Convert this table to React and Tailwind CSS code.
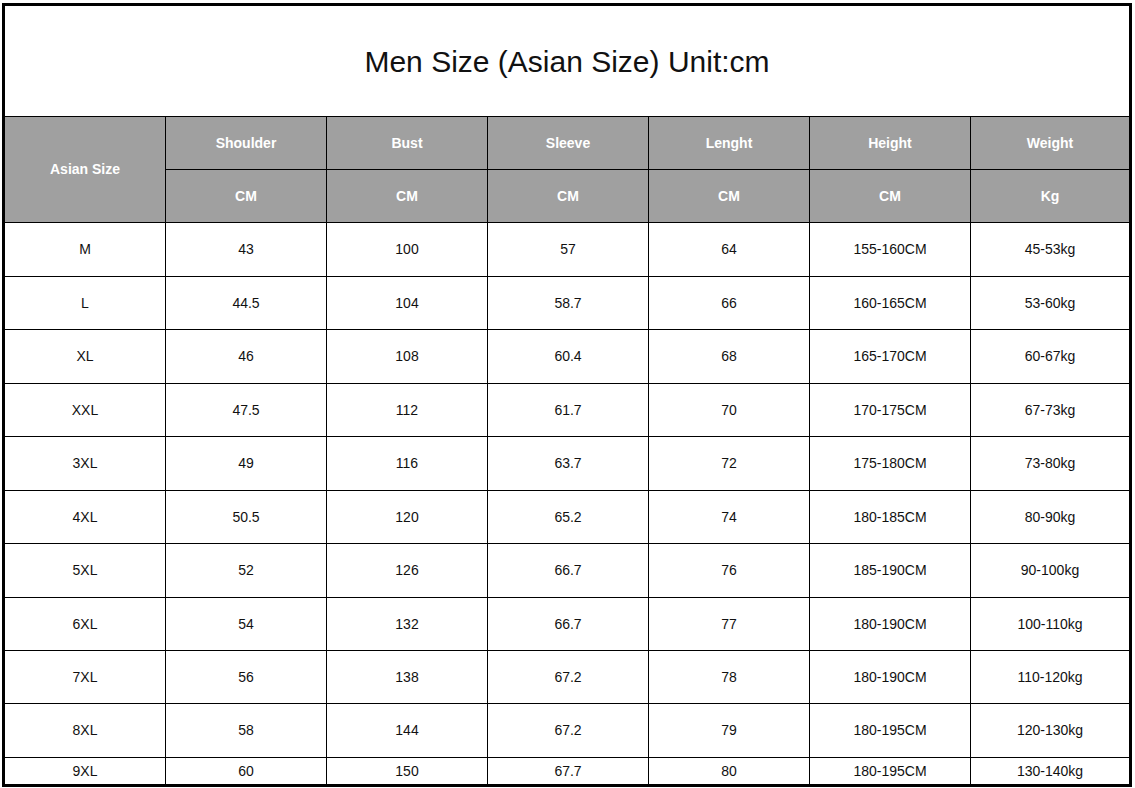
import React from "react";

const heads = [
  ["Shoulder", "CM"],
  ["Bust", "CM"],
  ["Sleeve", "CM"],
  ["Lenght", "CM"],
  ["Height", "CM"],
  ["Weight", "Kg"],
];

const rows = [
  ["M", "43", "100", "57", "64", "155-160CM", "45-53kg"],
  ["L", "44.5", "104", "58.7", "66", "160-165CM", "53-60kg"],
  ["XL", "46", "108", "60.4", "68", "165-170CM", "60-67kg"],
  ["XXL", "47.5", "112", "61.7", "70", "170-175CM", "67-73kg"],
  ["3XL", "49", "116", "63.7", "72", "175-180CM", "73-80kg"],
  ["4XL", "50.5", "120", "65.2", "74", "180-185CM", "80-90kg"],
  ["5XL", "52", "126", "66.7", "76", "185-190CM", "90-100kg"],
  ["6XL", "54", "132", "66.7", "77", "180-190CM", "100-110kg"],
  ["7XL", "56", "138", "67.2", "78", "180-190CM", "110-120kg"],
  ["8XL", "58", "144", "67.2", "79", "180-195CM", "120-130kg"],
  ["9XL", "60", "150", "67.7", "80", "180-195CM", "130-140kg"],
];

export default function App() {
  return (
    <div
      className="bg-white w-[1135px] h-[788px] pt-[3px] pl-[2px]"
      style={{ fontFamily: '"Liberation Sans", Arial, sans-serif' }}
    >
      <div className="w-[1130px] h-[784px] border-[3px] border-black flex flex-col bg-black">
        <div className="h-[110px] bg-white flex items-center justify-center text-[30px] text-[#111] shrink-0 pt-[1px]">
          Men Size (Asian Size) Unit:cm
        </div>
        <div
          className="grid gap-[1px] mt-[1px] flex-1 bg-black"
          style={{
            gridTemplateColumns: "160px 160px 160px 160px 160px 160px 1fr",
            gridTemplateRows:
              "52px 52px 53px 52px 53px 52px 53px 52px 53px 52px 52px 53px 1fr",
          }}
        >
          <div className="row-span-2 bg-[#a0a0a0] text-white font-bold text-[14px] flex items-center justify-center">
            Asian Size
          </div>
          {heads.map((h) => (
            <div
              key={h[0]}
              className="bg-[#a0a0a0] text-white font-bold text-[14px] flex items-center justify-center"
            >
              {h[0]}
            </div>
          ))}
          {heads.map((h) => (
            <div
              key={h[0] + "u"}
              className="bg-[#a0a0a0] text-white font-bold text-[14px] flex items-center justify-center"
            >
              {h[1]}
            </div>
          ))}
          {rows.map((r) =>
            r.map((c, i) => (
              <div
                key={r[0] + i}
                className="bg-white text-[#111] text-[14px] flex items-center justify-center"
              >
                {c}
              </div>
            ))
          )}
        </div>
      </div>
    </div>
  );
}
